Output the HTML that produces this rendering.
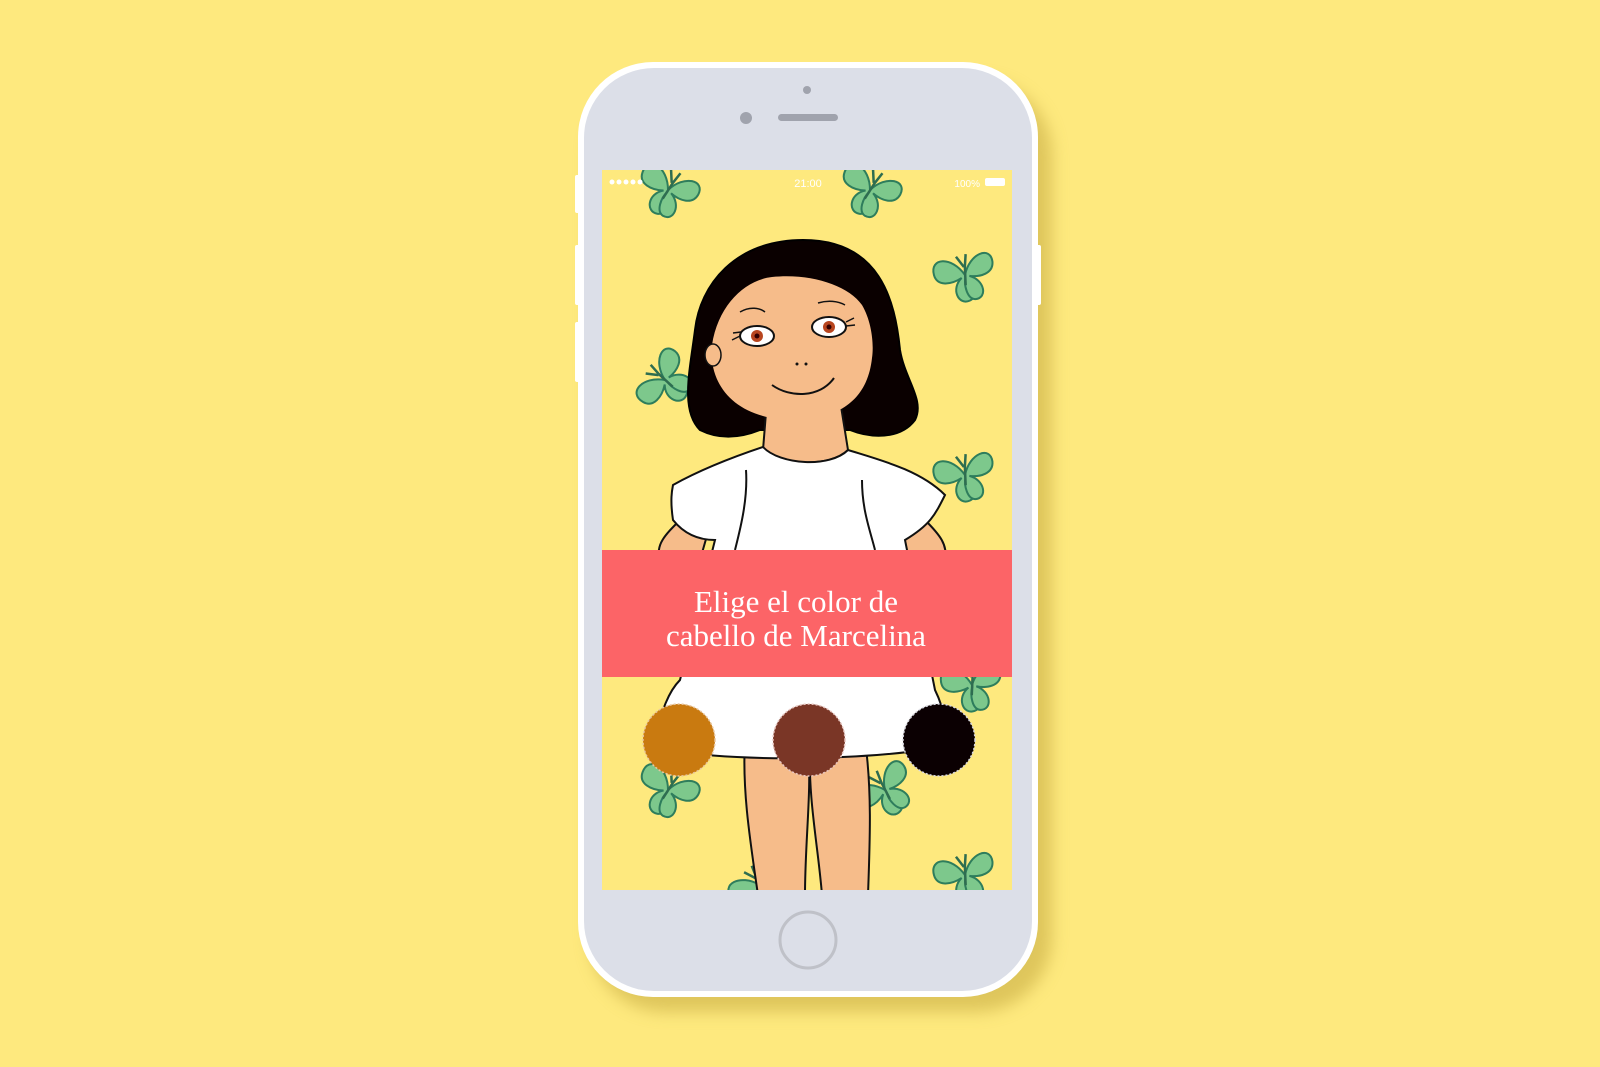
<!DOCTYPE html>
<html><head><meta charset="utf-8"><style>
html,body{margin:0;padding:0;width:1600px;height:1067px;overflow:hidden;background:#FEE97E;}
svg{position:absolute;left:0;top:0}
</style></head><body>
<svg width="1600" height="1067" viewBox="0 0 1600 1067">
<defs>
<filter id="blur" x="-20%" y="-20%" width="140%" height="140%"><feGaussianBlur stdDeviation="8"/></filter>
<g id="bf">
 <path d="M0,0 C-8,-22 -30,-26 -30,-8 C-30,4 -16,6 -4,2 C-18,10 -14,28 -2,26 C8,24 8,10 2,2 Z" fill="#7dc88c" stroke="#2e7d5c" stroke-width="2"/>
 <path d="M0,0 C10,-20 32,-22 30,-6 C28,6 14,6 4,2 C18,10 16,28 4,26 C-4,24 -4,10 0,2 Z" fill="#7dc88c" stroke="#2e7d5c" stroke-width="2"/>
 <path d="M-2,10 L2,-8 M1,-8 L-4,-20 M2,-8 L6,-20" stroke="#2e6d50" stroke-width="2.5" fill="none"/>
</g>
<clipPath id="scr"><rect x="602" y="170" width="410" height="720"/></clipPath>
</defs>
<!-- phone shadow -->
<rect x="590" y="80" width="462" height="932" rx="75" fill="#C9AE45" opacity="0.6" filter="url(#blur)"/>
<!-- phone -->
<rect x="578" y="62" width="460" height="935" rx="75" fill="#ffffff"/>
<rect x="584" y="68" width="448" height="923" rx="70" fill="#DCDFE8"/>
<rect x="575" y="175" width="5" height="38" rx="2" fill="#fff"/>
<rect x="575" y="245" width="5" height="60" rx="2" fill="#fff"/>
<rect x="575" y="322" width="5" height="60" rx="2" fill="#fff"/>
<rect x="1036" y="245" width="5" height="60" rx="2" fill="#fff"/>
<circle cx="807" cy="90" r="4" fill="#a0a3ad"/>
<circle cx="746" cy="118" r="6" fill="#a0a3ad"/>
<rect x="778" y="114" width="60" height="7" rx="3.5" fill="#a0a3ad"/>
<circle cx="808" cy="940" r="28" fill="none" stroke="#bfc1c8" stroke-width="3"/>
<!-- screen -->
<g clip-path="url(#scr)">
<rect x="602" y="170" width="410" height="720" fill="#FEE97E"/>
<use href="#bf" transform="translate(668,190) rotate(20)"/>
<use href="#bf" transform="translate(870,190) rotate(20)"/>
<use href="#bf" transform="translate(965,275) rotate(-15)"/>
<use href="#bf" transform="translate(665,380) rotate(-60)"/>
<use href="#bf" transform="translate(965,475) rotate(-15)"/>
<use href="#bf" transform="translate(972,685) rotate(-10)"/>
<use href="#bf" transform="translate(668,790) rotate(20)"/>
<use href="#bf" transform="translate(885,790) rotate(-40)"/>
<use href="#bf" transform="translate(965,875) rotate(-15)"/>
<use href="#bf" transform="translate(760,885) rotate(-40)"/>
<!-- status -->
<g fill="#fff"><circle cx="612" cy="182" r="2.5"/><circle cx="619" cy="182" r="2.5"/><circle cx="626" cy="182" r="2.5"/><circle cx="633" cy="182" r="2.5"/><circle cx="640" cy="182" r="2.5"/>
<rect x="985" y="178" width="20" height="8" rx="2"/></g>
<text x="808" y="187" font-family="Liberation Sans, sans-serif" font-size="11" fill="#fff" text-anchor="middle">21:00</text>
<text x="980" y="187" font-family="Liberation Sans, sans-serif" font-size="10" fill="#fff" text-anchor="end">100%</text>
<!-- arms -->
<path d="M680,520 C665,535 655,545 660,560 L700,560 L710,525 Z" fill="#F6BC8A" stroke="#111" stroke-width="2"/>
<path d="M925,520 C940,535 948,545 945,560 L905,560 L895,525 Z" fill="#F6BC8A" stroke="#111" stroke-width="2"/>
<!-- legs -->
<path d="M745,740 C742,790 750,840 758,895 L805,895 C805,840 812,790 808,745 Z" fill="#F6BC8A" stroke="#111" stroke-width="2"/>
<path d="M810,745 C808,800 818,845 822,895 L868,895 C870,840 872,790 865,740 Z" fill="#F6BC8A" stroke="#111" stroke-width="2"/>
<!-- hair -->
<path d="M803,240 C735,240 700,285 695,330 C690,370 680,410 700,430 C720,440 740,438 760,430 L850,430 C870,438 900,440 915,420 C925,400 905,380 900,350 C895,300 880,240 803,240 Z" fill="#0a0000" stroke="#000" stroke-width="2"/>
<!-- neck -->
<path d="M767,400 L763,450 C780,465 830,468 848,450 L840,400 Z" fill="#F6BC8A" stroke="#111" stroke-width="2"/>
<!-- face -->
<path d="M712,345 C718,305 745,280 772,277 C810,273 848,285 862,305 C872,322 874,345 872,358 C868,395 845,420 790,420 C735,418 708,385 712,345 Z" fill="#F6BC8A"/>
<ellipse cx="713" cy="355" rx="8" ry="11" fill="#F6BC8A" stroke="#111" stroke-width="1.5"/>
<ellipse cx="757" cy="336" rx="17" ry="10" fill="#fff" stroke="#111" stroke-width="2"/>
<circle cx="757" cy="336" r="6" fill="#b8451f"/><circle cx="757" cy="336" r="2.5" fill="#300"/>
<ellipse cx="829" cy="327" rx="17" ry="10" fill="#fff" stroke="#111" stroke-width="2"/>
<circle cx="829" cy="327" r="6" fill="#b8451f"/><circle cx="829" cy="327" r="2.5" fill="#300"/>
<path d="M740,312 C750,306 760,308 765,312 M818,303 C828,300 838,301 845,305 M740,336 L732,340 M741,332 L733,333 M846,322 L854,318 M846,326 L855,325" stroke="#111" stroke-width="1.5" fill="none"/>
<circle cx="797" cy="364" r="1.5" fill="#111"/><circle cx="806" cy="364" r="1.5" fill="#111"/>
<path d="M772,385 C790,398 820,398 834,378" stroke="#111" stroke-width="2" fill="none"/>
<!-- dress -->
<path d="M763,447 C780,465 830,468 848,450 C880,460 920,470 945,495 C935,515 930,525 905,540 L935,690 C945,710 950,740 945,745 C900,760 700,765 655,745 C660,710 670,690 680,680 L715,540 C700,540 685,535 673,520 C670,500 672,490 673,485 C700,470 730,458 763,447 Z" fill="#fff" stroke="#111" stroke-width="2"/>
<path d="M746,470 C748,500 740,530 735,550 M862,480 C862,510 870,530 875,550" stroke="#111" stroke-width="2" fill="none"/>
<!-- banner -->
<rect x="602" y="550" width="410" height="127" fill="#FC6467"/>
<text x="796" y="612" font-family="Liberation Serif, serif" font-size="31" fill="#fff" text-anchor="middle">Elige el color  de</text>
<text x="796" y="646" font-family="Liberation Serif, serif" font-size="31" fill="#fff" text-anchor="middle">cabello de Marcelina</text>
<!-- swatches -->
<circle cx="679" cy="740" r="36" fill="#C97A10" stroke="#e8c6a0" stroke-width="1.5" stroke-dasharray="2 2"/>
<circle cx="809" cy="740" r="36" fill="#7A3626" stroke="#e8c6c0" stroke-width="1.5" stroke-dasharray="2 2"/>
<circle cx="939" cy="740" r="36" fill="#0b0002" stroke="#d8d8e0" stroke-width="1.5" stroke-dasharray="2 2"/>
</g>
</svg>
</body></html>
